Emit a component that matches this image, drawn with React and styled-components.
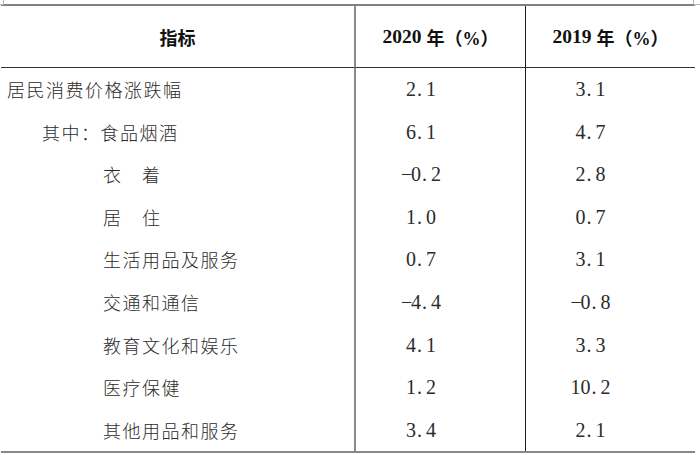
import React from 'react';
import styled, { createGlobalStyle } from 'styled-components';

const GlobalStyle = createGlobalStyle`
    html, body {
        margin: 0;
        padding: 0;
        background: #fff;
    }
    * {
        box-sizing: border-box;
    }
`;

const FONT = `"Liberation Serif", "Noto Sans CJK SC", serif`;

// Word-style text boundary marks at the page corners
const Page = styled.div`
    position: relative;
    width: 700px;
    height: 455px;
    padding: 4px 0 0 1px;

    &::before,
    &::after {
        content: '';
        position: absolute;
        top: 0;
        width: 3px;
        height: 4px;
        border-color: #b5b5b5;
        border-style: solid;
    }
    &::before {
        left: 0;
        border-width: 0 1px 1px 0;
    }
    &::after {
        left: 693px;
        width: 7px;
        border-width: 0 0 1px 1px;
    }
`;

const Sheet = styled.div`
    display: grid;
    grid-template-columns: 353px 171px 170px;
    grid-template-rows: 62px repeat(9, 42.56px);
    width: 694px;
    border-top: 2px solid #808080;
    border-bottom: 2px solid #878787;
    font-family: ${FONT};
    color: #2b2b2b;
`;

const Cell = styled.div`
    display: flex;
    align-items: center;
    justify-content: ${({ $align }) => ($align === 'left' ? 'flex-start' : 'center')};
    border-left: ${({ $col }) =>
        $col === 1 ? '2px solid #8a8a8a' : $col === 2 ? '1px solid #1c1c1c' : 'none'};
    white-space: nowrap;
`;

const HeadCell = styled(Cell)`
    border-bottom: 1px solid #333;
    font-weight: bold;
    color: #111;
    font-size: 18px;
    padding-top: 1px;

    b {
        font-size: 19.5px;
        margin-right: 5px;
    }
`;

const NameCell = styled(Cell)`
    padding-left: ${({ $level }) => [6, 41, 102][$level]}px;
    font-size: 18px;
    font-weight: 300;
    letter-spacing: 1.5px;
`;

const NumCell = styled(Cell)`
    padding-right: ${({ $col }) => ($col === 1 ? 39 : 40)}px;
    font-size: 20px;
    padding-top: 1px;
`;

const Glyph = styled.span`
    display: inline-block;
    width: 0.5em;
    text-align: ${({ $dot }) => ($dot ? 'left' : 'center')};
    padding-left: ${({ $dot }) => ($dot ? '1px' : '0')};
`;

const rows = [
    { name: '居民消费价格涨跌幅', level: 0, a: '2.1', b: '3.1' },
    { name: '其中：食品烟酒', level: 1, a: '6.1', b: '4.7' },
    { name: '衣　着', level: 2, a: '-0.2', b: '2.8' },
    { name: '居　住', level: 2, a: '1.0', b: '0.7' },
    { name: '生活用品及服务', level: 2, a: '0.7', b: '3.1' },
    { name: '交通和通信', level: 2, a: '-4.4', b: '-0.8' },
    { name: '教育文化和娱乐', level: 2, a: '4.1', b: '3.3' },
    { name: '医疗保健', level: 2, a: '1.2', b: '10.2' },
    { name: '其他用品和服务', level: 2, a: '3.4', b: '2.1' },
];

// numbers are set in fixed half-width cells, like the original SimSun figures
const Num = ({ value }) => (
    <>
        {value.split('').map((ch, i) => (
            <Glyph key={i} $dot={ch === '.'}>
                {ch === '-' ? '−' : ch}
            </Glyph>
        ))}
    </>
);

const App = () => {
    return (
        <Page>
            <GlobalStyle />
            <Sheet>
                <HeadCell>指标</HeadCell>
                <HeadCell $col={1}>
                    <b>2020</b>年（%）
                </HeadCell>
                <HeadCell $col={2}>
                    <b>2019</b>年（%）
                </HeadCell>
                {rows.map((r) => (
                    <React.Fragment key={r.name}>
                        <NameCell $align="left" $level={r.level}>
                            {r.name}
                        </NameCell>
                        <NumCell $col={1}>
                            <Num value={r.a} />
                        </NumCell>
                        <NumCell $col={2}>
                            <Num value={r.b} />
                        </NumCell>
                    </React.Fragment>
                ))}
            </Sheet>
        </Page>
    );
};

export default App;
